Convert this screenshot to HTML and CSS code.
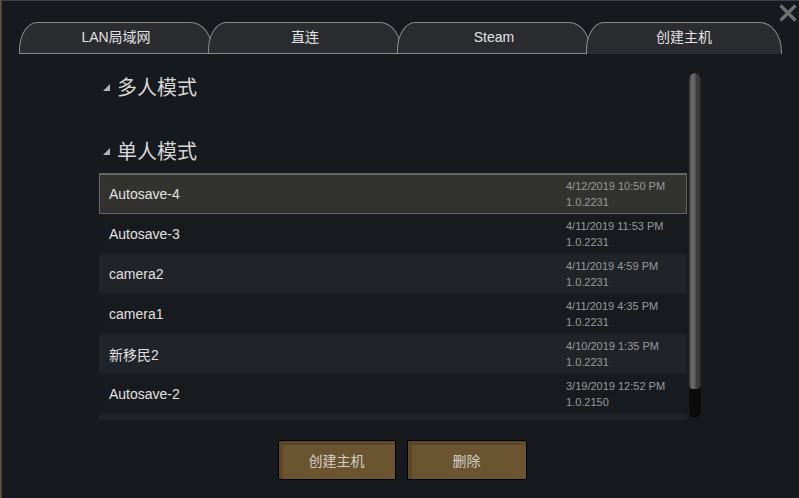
FILE: index.html
```html
<!DOCTYPE html>
<html lang="zh">
<head>
<meta charset="utf-8">
<title>创建主机</title>
<link rel="stylesheet" href="styles.css">
</head>
<body>
<div class="window">
  <div class="tabbar">
    <div class="tab">LAN局域网</div>
    <div class="tab">直连</div>
    <div class="tab">Steam</div>
    <div class="tab active">创建主机</div>
  </div>
  <button class="close" aria-label="关闭">
    <svg width="18" height="18" viewBox="0 0 18 18"><path d="M1.5 1.5L16.5 16.5M16.5 1.5L1.5 16.5" stroke="#6f7072" stroke-width="3.2" fill="none"/></svg>
  </button>
  <div class="body">
    <div class="list-area">
      <div class="section-header first"><span class="tri"></span>多人模式</div>
      <div class="section-header"><span class="tri"></span>单人模式</div>
      <div class="rows">
        <div class="row selected"><span class="name">Autosave-4</span><span class="meta">4/12/2019 10:50 PM<br>1.0.2231</span></div>
        <div class="row"><span class="name">Autosave-3</span><span class="meta">4/11/2019 11:53 PM<br>1.0.2231</span></div>
        <div class="row alt"><span class="name">camera2</span><span class="meta">4/11/2019 4:59 PM<br>1.0.2231</span></div>
        <div class="row"><span class="name">camera1</span><span class="meta">4/11/2019 4:35 PM<br>1.0.2231</span></div>
        <div class="row alt"><span class="name">新移民2</span><span class="meta">4/10/2019 1:35 PM<br>1.0.2231</span></div>
        <div class="row"><span class="name">Autosave-2</span><span class="meta">3/19/2019 12:52 PM<br>1.0.2150</span></div>
        <div class="row alt"></div>
      </div>
    </div>
    <div class="scrollbar"><div class="thumb"></div></div>
  </div>
  <div class="buttons">
    <button class="btn host">创建主机</button>
    <button class="btn del">删除</button>
  </div>
</div>
</body>
</html>
```

FILE: styles.css
```css
* { box-sizing: border-box; }
html, body {
  margin: 0;
  padding: 0;
  background: #16191d;
}
body {
  width: 799px;
  height: 498px;
  overflow: hidden;
  font-family: "Liberation Sans", "Noto Sans CJK SC", sans-serif;
  color: #dcdcdc;
}
.window {
  position: relative;
  width: 799px;
  height: 498px;
  background: #16191d;
  border-top: 1px solid #3c414c;
  border-left: 1px solid #6e5436;
  box-shadow: inset 1px 0 0 #3a3f48;
}
.tabbar {
  display: flex;
  padding: 21px 0 0 18px;
  height: 53px;
}
.tab {
  width: 194px;
  height: 32px;
  margin-right: -5px;
  background: #2b2c2f;
  border: 1px solid #8a8a8a;
  border-radius: 18px 22px 0 0 / 28px 30px 0 0;
  font-size: 14px;
  line-height: 28px;
  text-align: center;
  color: #e2e2e2;
}
.tab.active {
  width: 196px;
  border-bottom: none;
  line-height: 29px;
}
.close {
  position: absolute;
  top: 3px;
  right: 2px;
  width: 18px;
  height: 18px;
  padding: 0;
  border: none;
  background: none;
}
.close svg { display: block; }
.body {
  display: flex;
  padding-left: 98px;
  margin-top: 16px;
}
.list-area {
  width: 588px;
  height: 350px;
  overflow: hidden;
}
.section-header {
  display: flex;
  align-items: center;
  height: 32px;
  padding-left: 4px;
  font-family: "Noto Sans CJK SC", sans-serif;
  font-size: 20px;
  color: #d6d6d6;
  margin-bottom: 8px;
}
.section-header.first { margin-bottom: 32px; }
.tri {
  width: 0;
  height: 0;
  border-style: solid;
  border-width: 0 0 7px 7px;
  border-color: transparent transparent #b5b5b5 transparent;
  margin: 3px 7px 0 0;
}
.rows {
  display: flex;
  flex-direction: column;
}
.row {
  display: flex;
  align-items: center;
  height: 40px;
  padding-left: 10px;
  background: #171a1e;
}
.row.alt { background: #202328; }
.row.selected {
  background: #32332e;
  outline: 2px solid #666762;
  outline-offset: -1px;
}
.name {
  flex: 1;
  font-size: 14px;
  color: #e0e0e0;
}
.meta {
  width: 121px;
  font-size: 11px;
  line-height: 16px;
  color: #9a9a9a;
}
.scrollbar {
  width: 14px;
  height: 347px;
  margin: 2px 0 0 1px;
  border-radius: 7px;
  background: #0b0b0b;
  border: 1px solid #1e1e1e;
  overflow: hidden;
}
.thumb {
  height: 316px;
  border-radius: 6px 6px 4px 4px;
  background: linear-gradient(to right, #2a2a2a 0, #545454 12%, #6e6e6e 30%, #5a5a5a 50%, #3e3e3e 62%, #3a3a3a 85%, #222 100%);
}
.buttons {
  display: flex;
  justify-content: center;
  gap: 11px;
  margin-top: 20px;
  padding-left: 4px;
}
.btn {
  width: 118px;
  height: 40px;
  padding: 0;
  background: #6b5530;
  border: 1px solid #000;
  box-shadow: inset 4px 4px 0 #5c4828;
  font-family: "Noto Sans CJK SC", sans-serif;
  font-size: 14px;
  color: #d2cec6;
}
.btn.del { width: 120px; }
```
